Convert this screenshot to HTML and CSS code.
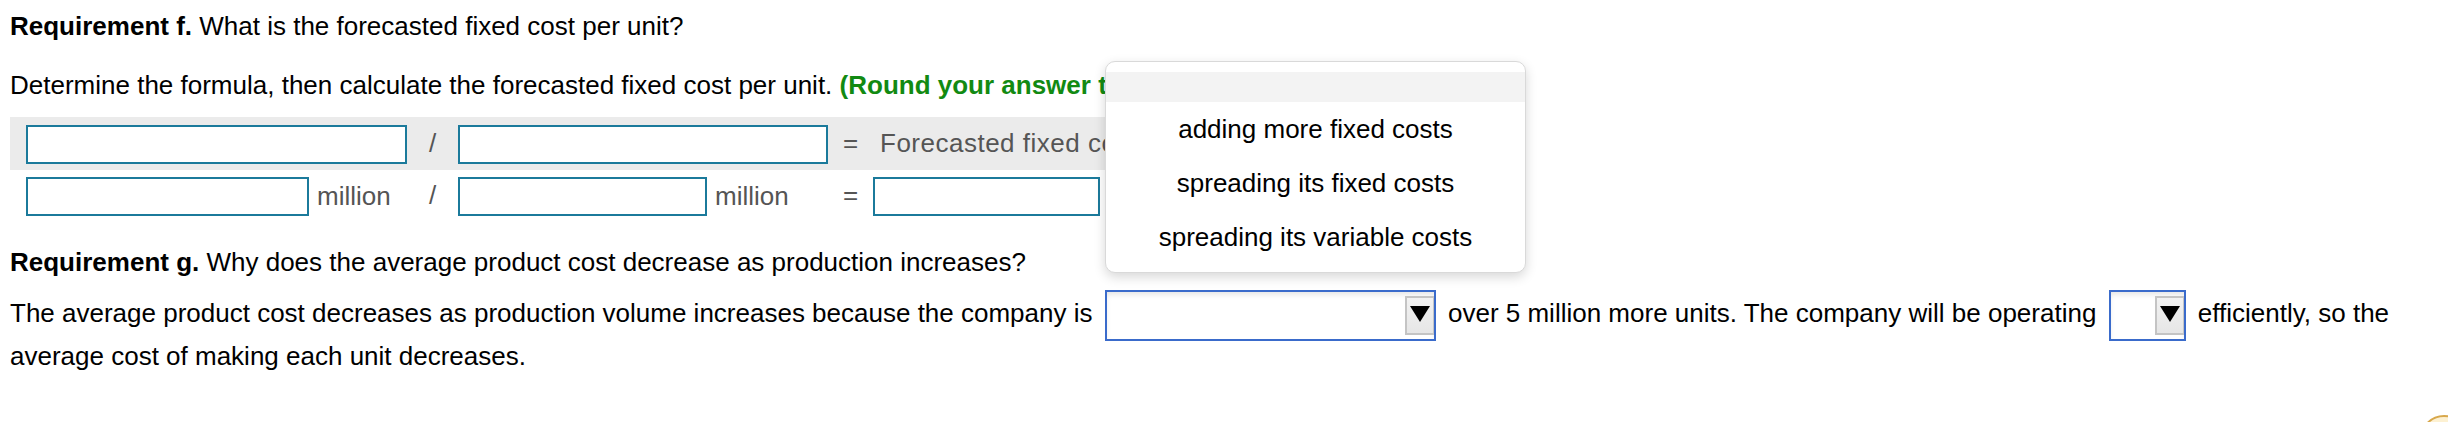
FILE: index.html
```html
<!DOCTYPE html>
<html lang="en">
<head>
<meta charset="utf-8">
<title>Requirement f and g</title>
<link rel="stylesheet" href="styles.css">
</head>
<body>
<div class="page">
  <p class="line req-f"><b>Requirement f.</b> What is the forecasted fixed cost per unit?</p>
  <p class="line instr">Determine the formula, then calculate the forecasted fixed cost per unit. <b class="hint">(Round your answer to the nearest cent.)</b></p>

  <table class="formula">
    <tr class="shaded">
      <td class="cell-a"><input class="box w381" type="text"></td>
      <td class="cell-op">/</td>
      <td class="cell-c"><input class="box w370" type="text"></td>
      <td class="cell-eq">=</td>
      <td class="cell-e"><span class="label">Forecasted fixed cost per unit</span></td>
    </tr>
    <tr>
      <td class="cell-a"><input class="box w283" type="text"><span class="unit">million</span></td>
      <td class="cell-op">/</td>
      <td class="cell-c"><input class="box w249" type="text"><span class="unit">million</span></td>
      <td class="cell-eq">=</td>
      <td class="cell-e"><input class="box w227" type="text"></td>
    </tr>
  </table>

  <p class="line req-g"><b>Requirement g.</b> Why does the average product cost decrease as production increases?</p>
  <p class="line answer"><span>The average product cost decreases as production volume increases because the company is</span> <span class="select wide"><span class="arrow"><svg width="20" height="16" viewBox="0 0 20 16"><polygon points="0,0 20,0 10,16" fill="#000"/></svg></span></span> <span>over 5 million more units. The company will be operating</span> <span class="select narrow"><span class="arrow"><svg width="20" height="16" viewBox="0 0 20 16"><polygon points="0,0 20,0 10,16" fill="#000"/></svg></span></span> <span>efficiently, so the</span> <span>average cost of making each unit decreases.</span></p>

  <div class="popup">
    <div class="popup-head"></div>
    <div class="option">adding more fixed costs</div>
    <div class="option">spreading its fixed costs</div>
    <div class="option">spreading its variable costs</div>
  </div>

  <div class="help-badge"><div class="help-circle"></div></div>
</div>
</body>
</html>
```

FILE: styles.css
```css
html, body {
  margin: 0;
  padding: 0;
  background: #ffffff;
}

body {
  width: 2448px;
  height: 422px;
  overflow: hidden;
  font-family: "Liberation Sans", Arial, Helvetica, sans-serif;
  font-size: 26px;
  color: #000000;
}

.page {
  position: relative;
  height: 422px;
  padding: 5px 8px 0 10px;
  box-sizing: border-box;
  overflow: hidden;
}

.line {
  margin: 0;
  line-height: 43px;
}

.instr {
  margin-top: 16px;
}

.hint {
  color: #128a12;
}

.formula {
  margin-top: 10px;
  border-collapse: collapse;
  border-spacing: 0;
  color: #555555;
}

.formula td {
  padding: 6px 0;
  vertical-align: middle;
  white-space: nowrap;
  line-height: 39px;
}

.shaded {
  background: #ebebeb;
}

.cell-a {
  padding-left: 16px !important;
}

.cell-op {
  width: 51px;
  text-align: center;
}

.cell-eq {
  width: 45px;
  text-align: center;
}

.cell-e {
  padding-right: 12px !important;
}

.label {
  padding-left: 7px;
  letter-spacing: 0.5px;
}

.box {
  display: inline-block;
  vertical-align: middle;
  height: 39px;
  margin: 0;
  padding: 0;
  box-sizing: border-box;
  border: 2px solid #1b7a9b;
  border-radius: 0;
  background: #ffffff;
  font: inherit;
}

.w381 { width: 381px; }
.w370 { width: 370px; }
.w283 { width: 283px; }
.w249 { width: 249px; }
.w227 { width: 227px; }

.unit {
  display: inline-block;
  vertical-align: middle;
  margin-left: 8px;
}

.req-g {
  margin-top: 19px;
}

.answer {
  margin-top: 8px;
}

.select {
  display: inline-flex;
  justify-content: flex-end;
  align-items: flex-start;
  vertical-align: middle;
  height: 51px;
  margin: -8px 5px;
  padding: 4px 0;
  box-sizing: border-box;
  border: 2px solid #3a6bcb;
  background: #ffffff;
  box-shadow: inset 0 4px 6px -2px rgba(0, 0, 0, 0.12);
}

.select.wide { width: 331px; }
.select.narrow { width: 77px; }

.arrow {
  display: flex;
  justify-content: center;
  align-items: flex-start;
  width: 29px;
  height: 39px;
  padding-top: 8px;
  box-sizing: border-box;
  border: 2px solid #c4c4c4;
  border-right-width: 1px;
  background: linear-gradient(#f2f2f2, #e6e6e6);
}

.arrow svg {
  display: block;
}

.popup {
  position: absolute;
  left: 1105px;
  top: 61px;
  width: 421px;
  box-sizing: border-box;
  padding: 10px 0 8px;
  border: 1px solid #d9d9d9;
  border-radius: 10px;
  background: #ffffff;
  box-shadow: 0 4px 12px rgba(0, 0, 0, 0.16);
}

.popup-head {
  height: 30px;
  background: #f3f3f3;
}

.option {
  height: 54px;
  line-height: 54px;
  text-align: center;
  color: #000000;
  white-space: nowrap;
}

.help-badge {
  position: absolute;
  left: 2420px;
  top: 415px;
  width: 28px;
  height: 7px;
  overflow: hidden;
}

.help-circle {
  width: 48px;
  height: 48px;
  box-sizing: border-box;
  border: 2px solid #d8a84c;
  border-radius: 50%;
  background: #fdf1d2;
}
```
